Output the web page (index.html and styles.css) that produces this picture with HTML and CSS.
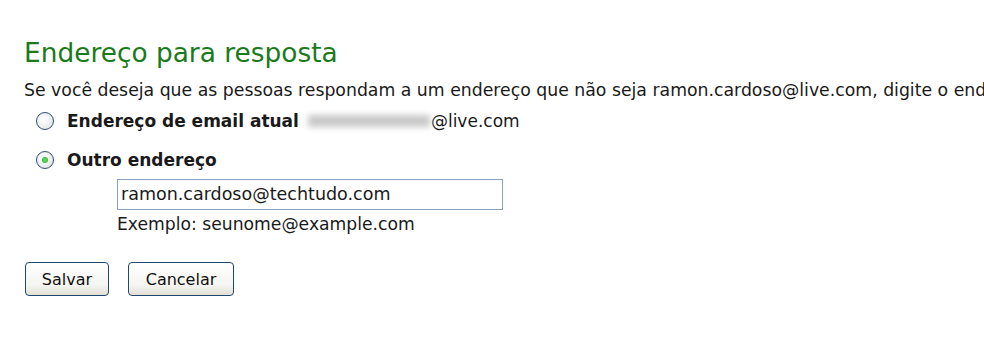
FILE: index.html
```html
<!DOCTYPE html>
<html lang="pt">
<head>
<meta charset="utf-8">
<link rel="stylesheet" href="styles.css">
</head>
<body>
<div class="page">
  <h1 class="title">Endereço para resposta</h1>
  <p class="desc">Se você deseja que as pessoas respondam a um endereço que não seja ramon.cardoso@live.com, digite o endereço aqui.</p>
  <div class="options">
    <label class="opt">
      <span class="radio"></span>
      <span class="opt-label">Endereço de email atual</span>
      <span class="blur"></span><span class="domain">@live.com</span>
    </label>
    <label class="opt">
      <span class="radio checked"><span class="dot"></span></span>
      <span class="opt-label">Outro endereço</span>
    </label>
    <div class="field">
      <div class="input">ramon.cardoso@techtudo.com</div>
      <div class="hint">Exemplo: seunome@example.com</div>
    </div>
  </div>
  <div class="buttons">
    <button class="btn btn-save">Salvar</button>
    <button class="btn btn-cancel">Cancelar</button>
  </div>
</div>
</body>
</html>
```
FILE: styles.css
```css
html, body {
  margin: 0;
  padding: 0;
  background: #ffffff;
  overflow: hidden;
}
.page {
  padding: 36px 0 0 24px;
  font-family: "DejaVu Sans", Verdana, sans-serif;
  color: #1a1a1a;
  white-space: nowrap;
}
.title {
  margin: 0;
  font-size: 26.4px;
  font-weight: normal;
  line-height: 34px;
  color: #1b7a1b;
}
.desc {
  margin: 9px 0 0 0;
  font-size: 17.3px;
  line-height: 22px;
  overflow: hidden;
}
.options {
  padding-left: 12px;
}
.opt {
  display: flex;
  align-items: center;
  height: 39px;
  font-size: 17px;
}
.opt:first-child {
  margin-top: 0;
}
.radio {
  width: 16px;
  height: 16px;
  border: 1px solid #2c4f79;
  border-radius: 50%;
  background: radial-gradient(circle at 40% 40%, #ffffff 0%, #eef0f0 50%, #d8dcdc 100%);
  display: flex;
  align-items: center;
  justify-content: center;
  margin-right: 13px;
  flex: none;
}
.dot {
  width: 6px;
  height: 6px;
  border-radius: 50%;
  background: radial-gradient(circle, #6ee06e 0%, #1ea81e 100%);
}
.opt-label {
  font-weight: bold;
}
.blur {
  display: inline-block;
  width: 122px;
  height: 12px;
  margin-left: 9px;
  background: #c8c8c8;
  filter: blur(3px);
}
.domain {
  margin-left: 1px;
}
.field {
  padding-left: 81px;
}
.input {
  width: 381px;
  height: 29px;
  border: 1px solid #8aa2bd;
  font-size: 17.5px;
  line-height: 29px;
  padding-left: 3px;
  box-sizing: content-box;
}
.hint {
  font-size: 17.2px;
  line-height: 24px;
  margin-top: 2px;
}
.buttons {
  display: flex;
  gap: 19px;
  margin-top: 26px;
  padding-left: 1px;
}
.btn {
  font-family: "DejaVu Sans", Verdana, sans-serif;
  font-size: 16px;
  color: #111;
  height: 34px;
  border: 1px solid #1f4770;
  border-radius: 4px;
  background: linear-gradient(#ffffff 0%, #f4f4f0 70%, #e2e0d6 100%);
  padding: 0;
}
.btn-save { width: 84px; }
.btn-cancel { width: 106px; }
```
